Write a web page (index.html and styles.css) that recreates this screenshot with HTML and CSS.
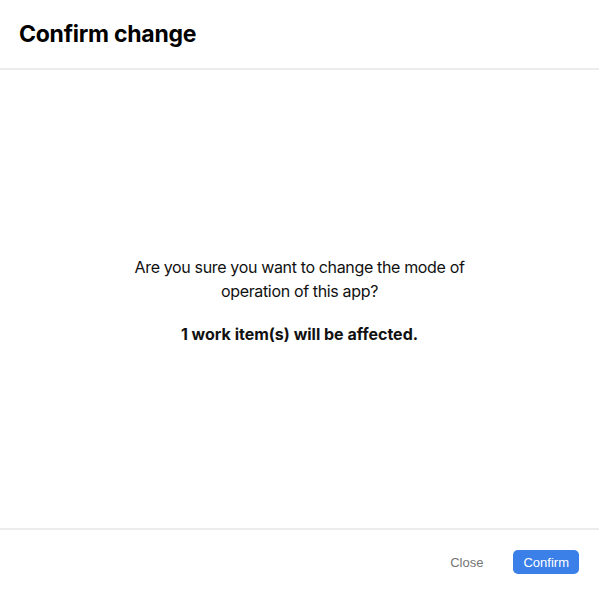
FILE: index.html
```html
<!DOCTYPE html>
<html lang="en">
<head>
<meta charset="utf-8">
<title>Confirm change</title>
<link rel="stylesheet" href="styles.css">
</head>
<body>
<div class="dialog">
  <header class="dialog-header">
    <h1 class="dialog-title">Confirm change</h1>
  </header>
  <main class="dialog-body">
    <div class="message">
      <p class="question">Are you sure you want to change the mode of operation of this app?</p>
      <p class="affected">1 work item(s) will be affected.</p>
    </div>
  </main>
  <footer class="dialog-footer">
    <button class="btn btn-link" type="button">Close</button>
    <button class="btn btn-primary" type="button">Confirm</button>
  </footer>
</div>
</body>
</html>
```
FILE: styles.css
```css
html, body {
  margin: 0;
  padding: 0;
  height: 100%;
  background: #ffffff;
}
body {
  font-family: Inter, "Liberation Sans", sans-serif;
  color: #111111;
}
.dialog {
  display: flex;
  flex-direction: column;
  height: 100%;
}
.dialog-header {
  height: 70px;
  box-sizing: border-box;
  display: flex;
  align-items: center;
  padding: 0 19px;
  border-bottom: 2px solid #ececec;
}
.dialog-title {
  margin: 0;
  font-size: 23px;
  font-weight: 700;
  letter-spacing: -0.25px;
  color: #000000;
}
.dialog-body {
  flex: 1;
  display: flex;
  align-items: center;
  justify-content: center;
}
.message {
  width: 360px;
  text-align: center;
  font-size: 16px;
  line-height: 24px;
  padding-top: 2px;
}
.message p {
  margin: 0;
}
.question {
  letter-spacing: -0.35px;
  margin-bottom: 19px !important;
}
.affected {
  font-weight: 700;
}
.dialog-footer {
  height: 66px;
  box-sizing: border-box;
  border-top: 2px solid #ececec;
  display: flex;
  align-items: center;
  justify-content: flex-end;
  gap: 20px;
  padding: 0 20px;
}
.btn {
  font-family: "Liberation Sans", Arial, sans-serif;
  font-size: 13px;
  height: 24px;
  border-radius: 5px;
  border: none;
  padding: 0 10px;
  cursor: pointer;
}
.btn-link {
  background: transparent;
  color: #757575;
}
.btn-primary {
  background: #3b7fe8;
  color: #ffffff;
}
```
